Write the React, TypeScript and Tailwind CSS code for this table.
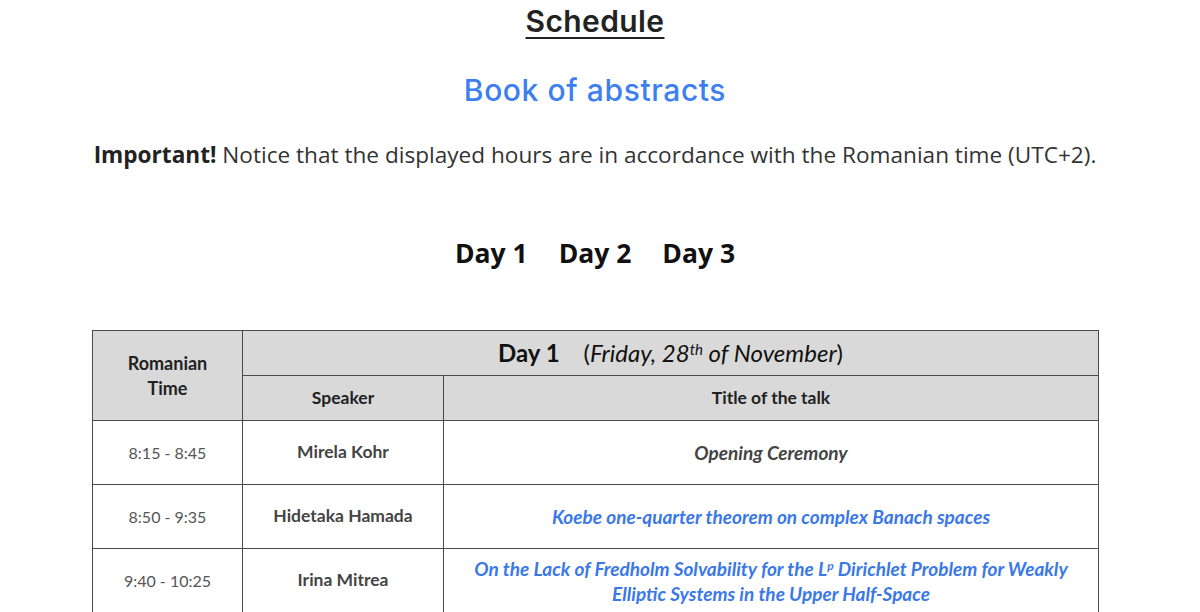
const rows = [
  { time: '8:15 - 8:45', speaker: 'Mirela Kohr', title: <span className="text-[#444]">Opening Ceremony</span> },
  {
    time: '8:50 - 9:35',
    speaker: 'Hidetaka Hamada',
    title: <span className="text-[#3b78e7]">Koebe one-quarter theorem on complex Banach spaces</span>,
  },
  {
    time: '9:40 - 10:25',
    speaker: 'Irina Mitrea',
    title: (
      <span className="text-[#3b78e7]">
        On the Lack of Fredholm Solvability for the L<sup className="text-[12px]">p</sup> Dirichlet Problem for Weakly
        <br />
        Elliptic Systems in the Upper Half-Space
      </span>
    ),
  },
];

export default function App() {
  return (
    <div className="bg-white min-h-screen w-[1200px] h-[612px] overflow-hidden">
      <div className="w-[1190px]">
        {/* Headings */}
        <div className="flex flex-col items-center pt-[2px]">
          <h1 className="font-['Inter',sans-serif] font-semibold text-[30px] text-[#222] underline underline-offset-[5px] decoration-2 leading-[38px] tracking-[0.4px]">
            Schedule
          </h1>
          <a className="mt-[31px] font-['Inter',sans-serif] font-medium text-[30px] text-[#3d7ff0] leading-[38px] tracking-[0.6px]">
            Book of abstracts
          </a>
          <p className="mt-[31px] font-['Open_Sans',sans-serif] text-[22.6px] text-[#333] leading-[30px] whitespace-nowrap">
            <b className="text-[#222]">Important!</b> Notice that the displayed hours are in accordance with the Romanian time (UTC+2).
          </p>
          <div className="mt-[65px] flex gap-[31px] font-['Open_Sans',sans-serif] font-bold text-[26.5px] text-[#111] leading-[36px]">
            <span>Day 1</span>
            <span>Day 2</span>
            <span>Day 3</span>
          </div>
        </div>

        {/* Table */}
        <table className="mt-[59px] ml-[92px] w-[1007px] border-collapse font-['Lato',sans-serif] text-center">
          <thead>
            <tr className="h-[45px] bg-[#d9d9d9]">
              <th rowSpan={2} className="w-[150px] border border-[#4a4a4a] text-[18px] font-bold text-[#222] leading-[25px]">
                Romanian
                <br />
                Time
              </th>
              <th colSpan={2} className="border border-[#4a4a4a] text-[24px] text-[#111]">
                <span className="font-bold">Day 1</span>
                <span className="font-normal ml-[24px]">
                  (<i>Friday, 28<sup className="text-[15px]">th</sup> of November</i>)
                </span>
              </th>
            </tr>
            <tr className="h-[45px] bg-[#d9d9d9]">
              <th className="w-[201px] border border-[#4a4a4a] text-[17.5px] font-bold text-[#222]">Speaker</th>
              <th className="border border-[#4a4a4a] text-[17.5px] font-bold text-[#222]">Title of the talk</th>
            </tr>
          </thead>
          <tbody>
            {rows.map((r, i) => (
              <tr key={i} className="h-[64px]">
                <td className="border border-[#4a4a4a] text-[16px] text-[#555]">{r.time}</td>
                <td className="border border-[#4a4a4a] text-[17.5px] font-bold text-[#444]">{r.speaker}</td>
                <td className="border border-[#4a4a4a] text-[19px] font-bold italic leading-[25px]">{r.title}</td>
              </tr>
            ))}
          </tbody>
        </table>
      </div>
    </div>
  );
}
